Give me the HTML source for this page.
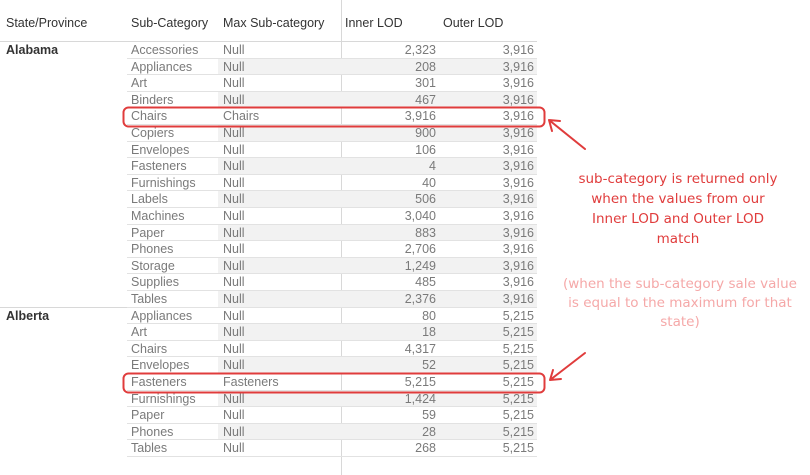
<!DOCTYPE html><html><head><style>
body{margin:0;width:810px;height:475px;background:#fff;position:relative;font-family:"Liberation Sans",sans-serif;overflow:hidden}
.h{position:absolute;top:16px;font-size:12.5px;color:#333}
.r{position:absolute;left:127px;width:410px;height:16.6px;border-bottom:1px solid #e2e2e2;box-sizing:border-box;font-size:12.5px;color:#7a7a7a}
.r span{position:absolute;top:1px}
.g{position:absolute;left:91px;top:0;width:319px;height:100%;background:#f2f2f2}
.n1{right:101px}.n2{right:3px}
.an{position:absolute;font-family:"DejaVu Sans",sans-serif;text-align:center;font-size:13.5px}
</style></head><body>
<div class="h" style="left:6px">State/Province</div>
<div class="h" style="left:131px">Sub-Category</div>
<div class="h" style="left:223px">Max Sub-category</div>
<div class="h" style="left:345px">Inner LOD</div>
<div class="h" style="left:443px">Outer LOD</div>
<div style="position:absolute;left:0;top:41px;width:537px;height:1px;background:#d8d8d8"></div>
<div style="position:absolute;left:341px;top:0;width:1px;height:475px;background:#d8d8d8"></div>
<div style="position:absolute;left:6px;top:43px;font-size:12.5px;font-weight:bold;color:#333">Alabama</div>
<div style="position:absolute;left:6px;top:309px;font-size:12.5px;font-weight:bold;color:#333">Alberta</div>
<div style="position:absolute;left:0;top:307px;width:127px;height:1px;background:#d8d8d8"></div>
<div id="rows"></div>
<script>
var d=[["Accessories","Null","2,323","3,916"],["Appliances","Null","208","3,916"],["Art","Null","301","3,916"],["Binders","Null","467","3,916"],["Chairs","Chairs","3,916","3,916"],["Copiers","Null","900","3,916"],["Envelopes","Null","106","3,916"],["Fasteners","Null","4","3,916"],["Furnishings","Null","40","3,916"],["Labels","Null","506","3,916"],["Machines","Null","3,040","3,916"],["Paper","Null","883","3,916"],["Phones","Null","2,706","3,916"],["Storage","Null","1,249","3,916"],["Supplies","Null","485","3,916"],["Tables","Null","2,376","3,916"],["Appliances","Null","80","5,215"],["Art","Null","18","5,215"],["Chairs","Null","4,317","5,215"],["Envelopes","Null","52","5,215"],["Fasteners","Fasteners","5,215","5,215"],["Furnishings","Null","1,424","5,215"],["Paper","Null","59","5,215"],["Phones","Null","28","5,215"],["Tables","Null","268","5,215"]];
var h="";d.forEach(function(x,i){h+='<div class="r" style="top:'+(42+i*16.6)+'px">'+(i%2?'<div class="g"></div>':'')+'<span style="left:4px">'+x[0]+'</span><span style="left:96px">'+x[1]+'</span><span class="n1">'+x[2]+'</span><span class="n2">'+x[3]+'</span></div>'});document.getElementById("rows").innerHTML=h;
</script>
<svg style="position:absolute;left:0;top:0" width="810" height="475" fill="none" stroke="#e03c3c" stroke-width="2" stroke-linecap="round">
<rect x="123.5" y="107.5" width="421" height="19" rx="5"/>
<rect x="123.5" y="373.5" width="421" height="19" rx="5"/>
<path d="M585 149 L549 120 M549 120 L552 131 M549 120 L560 121"/>
<path d="M585 353 L550 380 M550 380 L561 379 M550 380 L553 370"/>
</svg>
<div class="an" style="left:550px;top:169px;width:256px;color:#e03c3c;line-height:20px">sub-category is returned only<br>when the values from our<br>Inner LOD and Outer LOD<br>match</div>
<div class="an" style="left:540px;top:275px;width:280px;color:#f5a8a8;line-height:19px">(when the sub-category sale value<br>is equal to the maximum for that<br>state)</div>
</body></html>
